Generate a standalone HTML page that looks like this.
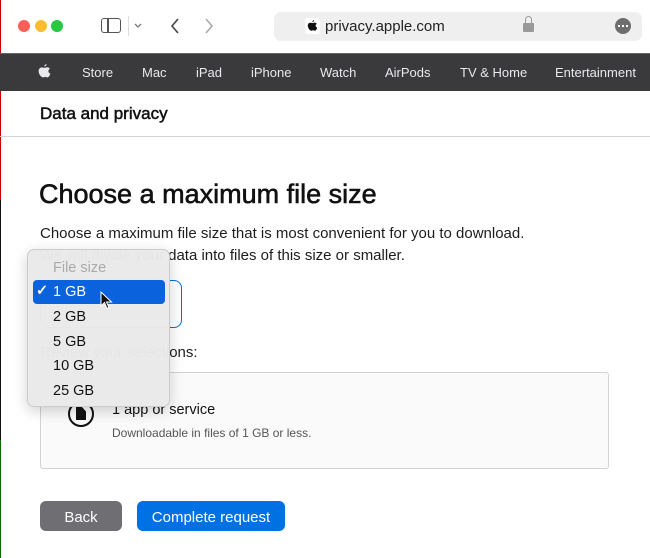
<!DOCTYPE html>
<html><head><style>
*{margin:0;padding:0;box-sizing:border-box}
body{width:650px;height:558px;overflow:hidden;background:#fff;font-family:"Liberation Sans",sans-serif;position:relative;color:#1d1d1f}
.a{position:absolute}
.strip{left:0;width:1px}
.nav span{position:absolute;top:65px;font-size:13px;color:#e8e8ed}
.menu div{position:absolute;left:52px;font-size:14.5px;color:#111}
</style></head><body>
<div class="a strip" style="top:0;height:200px;background:#c00"></div>
<div class="a strip" style="top:200px;height:240px;background:#111"></div>
<div class="a strip" style="top:440px;height:118px;background:#0a6a0a"></div>
<!-- toolbar -->
<div class="a" style="left:18px;top:20px;width:12px;height:12px;border-radius:50%;background:#fe5f57"></div>
<div class="a" style="left:35px;top:20px;width:12px;height:12px;border-radius:50%;background:#febc2e"></div>
<div class="a" style="left:51px;top:20px;width:12px;height:12px;border-radius:50%;background:#28c840"></div>
<div class="a" style="left:101px;top:18px;width:20px;height:15px;border:1.5px solid #555;border-radius:3px"></div>
<div class="a" style="left:107px;top:18px;width:1.5px;height:15px;background:#555"></div>
<div class="a" style="left:128px;top:16px;width:1px;height:20px;background:#ddd"></div>
<svg class="a" style="left:108px;top:18px" width="80" height="16"><path d="M27 6l3 3 3-3" stroke="#777" fill="none" stroke-width="1.3"/><path d="M70 1l-6 7 6 7" stroke="#444" fill="none" stroke-width="1.6"/></svg>
<svg class="a" style="left:204px;top:18px" width="12" height="16"><path d="M2 1l6 7-6 7" stroke="#aaa" fill="none" stroke-width="1.6"/></svg>
<div class="a" style="left:274px;top:12px;width:368px;height:29px;border-radius:7px;background:#efefef"></div>
<div class="a" style="left:305px;top:18px;width:15px;height:16px;background:#fff;border-radius:3px"></div>
<svg class="a" style="left:307px;top:20px" width="11" height="12" viewBox="0 0 24 28"><path d="M16 0c0 2-1.5 4.5-4.5 5 0-2.5 2-4.5 4.5-5zM12 7c2 0 3-1 5-1 2 0 4 1 5 3-4 2-3.5 7 1 9-1 3-3 7-5.5 7-1.5 0-2-1-4-1s-2.5 1-4 1C6 25 1 19 1 13c0-4 3-6.5 5.5-6.5 2 0 3.5 .5 5.5.5z" fill="#111"/></svg>
<div class="a" style="left:325px;top:18px;font-size:15px;color:#222">privacy.apple.com</div>
<div class="a" style="left:523px;top:23px;width:11px;height:9px;background:#999;border-radius:1px"></div>
<div class="a" style="left:525px;top:16px;width:7px;height:9px;border:1.5px solid #999;border-bottom:none;border-radius:4px 4px 0 0"></div>
<div class="a" style="left:615px;top:18px;width:16px;height:16px;border-radius:50%;background:#6e6e6e"></div>
<div class="a" style="left:618px;top:25px;width:2px;height:2px;background:#fff;box-shadow:4px 0 #fff,8px 0 #fff"></div>
<!-- nav -->
<div class="a" style="left:0;top:53px;width:650px;height:38px;background:#3a3a3c;border-top:1px solid #666"></div>
<svg class="a" style="left:38px;top:64px" width="13" height="15" viewBox="0 0 24 28"><path d="M16 0c0 2-1.5 4.5-4.5 5 0-2.5 2-4.5 4.5-5zM12 7c2 0 3-1 5-1 2 0 4 1 5 3-4 2-3.5 7 1 9-1 3-3 7-5.5 7-1.5 0-2-1-4-1s-2.5 1-4 1C6 25 1 19 1 13c0-4 3-6.5 5.5-6.5 2 0 3.5 .5 5.5.5z" fill="#e8e8ed"/></svg>
<div class="nav">
<span style="left:82px">Store</span><span style="left:142px">Mac</span><span style="left:196px">iPad</span><span style="left:251px">iPhone</span><span style="left:320px">Watch</span><span style="left:385px">AirPods</span><span style="left:460px">TV &amp; Home</span><span style="left:555px">Entertainment</span>
</div>
<div class="a" style="left:40px;top:104px;font-size:17px;color:#111;-webkit-text-stroke:0.5px #111">Data and privacy</div>
<div class="a" style="left:0;top:136px;width:650px;height:1px;background:#d2d2d7"></div>
<div class="a" style="left:39px;top:179px;font-size:27px;color:#111;-webkit-text-stroke:0.6px #111">Choose a maximum file size</div>
<div class="a" style="left:40px;top:223px;font-size:15px;line-height:22px;color:#1d1d1f">Choose a maximum file size that is most convenient for you to download.<br>We will divide your data into files of this size or smaller.</div>
<div class="a" style="left:40px;top:280px;width:142px;height:48px;border:1.5px solid #0071e3;border-radius:8px"></div>
<div class="a" style="left:40px;top:344px;font-size:15px">Review your selections:</div>
<div class="a" style="left:40px;top:372px;width:569px;height:97px;background:#fafafa;border:1px solid #d2d2d7;border-radius:3px"></div>
<div class="a" style="left:68px;top:401px;width:26px;height:26px;border:2.5px solid #111;border-radius:50%"></div>
<div class="a" style="left:76px;top:407px;width:10px;height:13px;background:#111;clip-path:polygon(0 0,60% 0,100% 35%,100% 100%,0 100%)"></div>
<div class="a" style="left:112px;top:402px;font-size:14.5px;color:#111">1 app or service</div>
<div class="a" style="left:112px;top:426px;font-size:12px;color:#555">Downloadable in files of 1 GB or less.</div>
<div class="a" style="left:40px;top:501px;width:82px;height:30px;background:#6e6e73;border-radius:6px;color:#fff;font-size:15px;text-align:center;line-height:31px;padding-top:1px">Back</div>
<div class="a" style="left:137px;top:501px;width:148px;height:30px;background:#0071e3;border-radius:6px;color:#fff;font-size:15px;text-align:center;line-height:31px;padding-top:1px">Complete request</div>
<!-- menu -->
<div class="a menu" style="left:27px;top:249px;width:143px;height:158px;background:rgba(234,234,234,0.98);border:1px solid #ccc;border-radius:7px;box-shadow:0 4px 14px rgba(0,0,0,0.18)">
<div style="left:25px;top:10px;color:#aaa">File size</div>
<div style="left:5px;top:30px;width:132px;height:24px;background:#0a62dc;border-radius:4px"></div>
<div style="left:8px;top:33px;color:#fff;font-weight:bold">✓</div>
<div style="left:25px;top:34px;color:#fff">1 GB</div>
<div style="left:25px;top:59px">2 GB</div>
<div style="left:25px;top:84px">5 GB</div>
<div style="left:25px;top:108px">10 GB</div>
<div style="left:25px;top:133px">25 GB</div>
</div>
<svg class="a" style="left:100px;top:291px" width="14" height="20"><path d="M1 1v14l3.5-3.5 2.5 6 2-1-2.5-5.5h5z" fill="#111" stroke="#fff" stroke-width="1"/></svg>
</body></html>
